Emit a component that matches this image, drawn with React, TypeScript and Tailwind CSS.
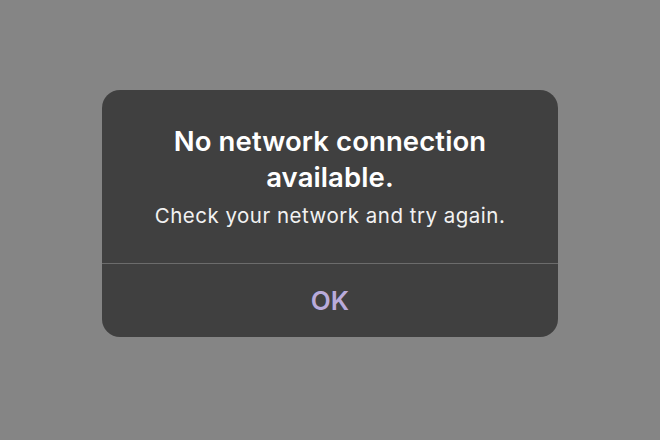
import React from "react";

// Simple alert dialog shown when the device is offline
const AlertDialog = ({ title, message, action }: { title: string; message: string; action: string }) => {
  return (
    <div className="w-[456px] rounded-[18px] bg-[#404040] overflow-hidden">
      <div className="h-[173px] flex flex-col items-center pt-[33px] px-6 text-center">
        <h1 className="text-[27.5px] leading-[36px] font-semibold text-white tracking-[0.1px] w-[340px]">{title}</h1>
        <p className="mt-[9px] text-[20.5px] leading-[24px] text-[#f2f2f2] tracking-[0.5px]">{message}</p>
      </div>
      <div className="h-px bg-[#6c6c6c]" />
      <button className="w-full h-[73px] flex items-center justify-center text-[26px] font-semibold text-[#b9abdb]">
        {action}
      </button>
    </div>
  );
};

export default function App() {
  return (
    <div
      className="w-[660px] h-[440px] bg-[#858585] flex items-start justify-center pt-[90px]"
      style={{ fontFamily: "Inter, 'Noto Sans', sans-serif" }}
    >
      <AlertDialog
        title="No network connection available."
        message="Check your network and try again."
        action="OK"
      />
    </div>
  );
}
